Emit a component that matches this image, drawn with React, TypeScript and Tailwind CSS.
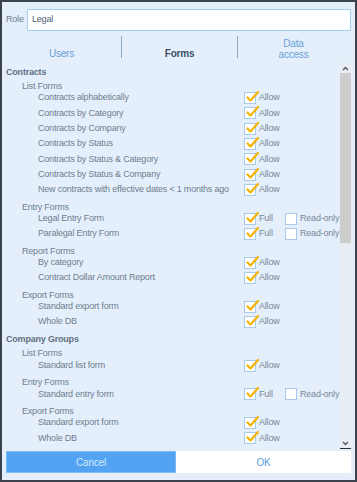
import React from "react";

const FONT = '"Liberation Sans", Arial, sans-serif';

function Check({ checked }: { checked: boolean }) {
  return (
    <span className="relative inline-block w-[12px] h-[12px] shrink-0 border border-[#a9c9ea] bg-white">
      {checked && (
        <svg
          className="absolute left-[1px] top-[-3px]"
          width="13"
          height="13"
          viewBox="0 0 13 13"
        >
          <path
            d="M1.5 7.5 L4.5 10.5 L12 2"
            stroke="#f3b400"
            strokeWidth="2.2"
            fill="none"
            strokeLinecap="round"
            strokeLinejoin="round"
          />
        </svg>
      )}
    </span>
  );
}

type Item = { label: string; kind: "allow" | "full" };

function ItemRow({ item }: { item: Item }) {
  return (
    <div className="flex h-[15.3px] items-center">
      <div className="w-[242px] shrink-0 pl-[36px] text-[#6f7e90] whitespace-nowrap">
        {item.label}
      </div>
      <div className="flex items-center">
        <Check checked />
        {item.kind === "allow" ? (
          <span className="ml-[3px] text-[#7a8898]">Allow</span>
        ) : (
          <>
            <span className="ml-[3px] w-[26px] text-[#7a8898]">Full</span>
            <Check checked={false} />
            <span className="ml-[3px] text-[#7a8898]">Read-only</span>
          </>
        )}
      </div>
    </div>
  );
}

function Sub({ title }: { title: string }) {
  return (
    <div className="h-[13.5px] pt-[3px] pl-[20px] leading-[12px] text-[#6f7e90]">
      {title}
    </div>
  );
}

function Section({ title, mt }: { title: string; mt?: boolean }) {
  return (
    <div
      className={
        "h-[10px] pl-[4px] leading-[10px] font-bold text-[#5f6f82] " +
        (mt ? "mt-[4.5px]" : "")
      }
    >
      {title}
    </div>
  );
}

const data: { section: string; groups: { title: string; items: Item[] }[] }[] = [
  {
    section: "Contracts",
    groups: [
      {
        title: "List Forms",
        items: [
          { label: "Contracts alphabetically", kind: "allow" },
          { label: "Contracts by Category", kind: "allow" },
          { label: "Contracts by Company", kind: "allow" },
          { label: "Contracts by Status", kind: "allow" },
          { label: "Contracts by Status & Category", kind: "allow" },
          { label: "Contracts by Status & Company", kind: "allow" },
          { label: "New contracts with effective dates < 1 months ago", kind: "allow" },
        ],
      },
      {
        title: "Entry Forms",
        items: [
          { label: "Legal Entry Form", kind: "full" },
          { label: "Paralegal Entry Form", kind: "full" },
        ],
      },
      {
        title: "Report Forms",
        items: [
          { label: "By category", kind: "allow" },
          { label: "Contract Dollar Amount Report", kind: "allow" },
        ],
      },
      {
        title: "Export Forms",
        items: [
          { label: "Standard export form", kind: "allow" },
          { label: "Whole DB", kind: "allow" },
        ],
      },
    ],
  },
  {
    section: "Company Groups",
    groups: [
      { title: "List Forms", items: [{ label: "Standard list form", kind: "allow" }] },
      { title: "Entry Forms", items: [{ label: "Standard entry form", kind: "full" }] },
      {
        title: "Export Forms",
        items: [
          { label: "Standard export form", kind: "allow" },
          { label: "Whole DB", kind: "allow" },
        ],
      },
    ],
  },
];

export default function App() {
  return (
    <div
      className="w-[357px] h-[482px] border-2 border-[#3b444e] bg-[#e4effb] flex flex-col text-[9px] tracking-[-0.2px] overflow-hidden"
      style={{ fontFamily: FONT }}
    >
      {/* Role row */}
      <div className="flex items-center h-[22px] mt-[7px] pl-[4px] pr-[4px]">
        <span className="w-[21px] text-[#6f7e90]">Role</span>
        <div className="flex-1 h-[22px] border border-[#a8cdef] bg-white flex items-center pl-[4px] text-[#4e5e74]">
          Legal
        </div>
      </div>
      {/* Tabs */}
      <div className="flex h-[32px] items-stretch pr-[6px]">
        <div className="w-[119px] flex items-end justify-center pb-[2px] text-[#6aa0d8] text-[10px]">
          Users
        </div>
        <div className="w-px bg-[#8fa7c0] mt-[5px] mb-[5px]" />
        <div className="w-[115px] flex items-end justify-center pb-[2px] font-bold text-[#3d4f69] text-[10px]">
          Forms
        </div>
        <div className="w-px bg-[#8fa7c0] mt-[5px] mb-[5px]" />
        <div className="flex-1 flex flex-col items-center justify-end pb-[3px] text-[#6aa0d8] text-[10px] leading-[10.5px]">
          <span>Data</span>
          <span>access</span>
        </div>
      </div>
      {/* Content */}
      <div className="flex h-[386px]">
        <div className="flex-1 overflow-hidden pt-[4px]">
          {data.map((s, si) => (
            <div key={si}>
              <Section title={s.section} mt={si > 0} />
              {s.groups.map((g, gi) => (
                <div key={gi}>
                  <Sub title={g.title} />
                  {g.items.map((it, ii) => (
                    <ItemRow key={ii} item={it} />
                  ))}
                </div>
              ))}
            </div>
          ))}
        </div>
        {/* Scrollbar */}
        <div className="w-[11px] mr-[4px] flex flex-col bg-[#e8eef4]">
          <div className="h-[10px] flex items-center justify-center">
            <svg width="7" height="5" viewBox="0 0 7 5">
              <path d="M1 4 L3.5 1.5 L6 4" stroke="#555" strokeWidth="1.3" fill="none" />
            </svg>
          </div>
          <div className="h-[170px] bg-[#cdcdcd]" />
          <div className="flex-1" />
          <div className="h-[10px] flex items-center justify-center">
            <svg width="7" height="5" viewBox="0 0 7 5">
              <path d="M1 1 L3.5 3.5 L6 1" stroke="#555" strokeWidth="1.3" fill="none" />
            </svg>
          </div>
          <div className="h-px bg-[#333]" />
        </div>
      </div>
      {/* Buttons */}
      <div className="flex h-[22px] mt-[2px] px-[4px] pr-[4px]">
        <div className="w-[170px] bg-[#53a3f3] border border-[#7cbaf6] flex items-center justify-center text-[#d3e8fc] text-[10px]">
          Cancel
        </div>
        <div className="flex-1 bg-white flex items-center justify-center text-[#5a9be0] text-[10px]">
          OK
        </div>
      </div>
    </div>
  );
}
